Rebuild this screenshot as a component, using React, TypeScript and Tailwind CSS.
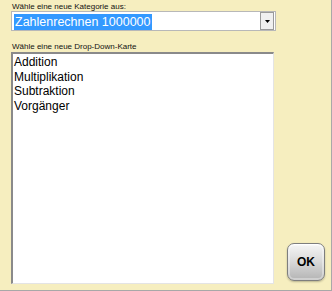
import { useState } from "react";

const cards = ["Addition", "Multiplikation", "Subtraktion", "Vorgänger"];

export default function App() {
  const [selected] = useState("Zahlenrechnen 1000000");

  return (
    <div className="w-[332px] h-[291px] bg-[#f6eebf] border-r border-b border-[#a8a8a8] font-['Liberation_Sans',Arial,sans-serif] text-black overflow-hidden">
      <div className="flex flex-col pl-[11px] pt-[2px]">
        <label className="block h-[9px] pl-[1px] text-[8px] leading-[9px] text-[#111]">
          Wähle eine neue Kategorie aus:
        </label>

        {/* combobox */}
        <div className="flex w-[265px] h-[20px] items-center bg-white border border-[#b8b8b8]">
          <div className="flex-1 pl-[2px]">
            <span className="inline-block bg-[#3399ff] text-white text-[12.5px] leading-[16px] px-[1px]">
              {selected}
            </span>
          </div>
          <div className="mr-[1px] flex h-[18px] w-[14px] items-center justify-center border border-[#9a9a9a] bg-[#f0f0f0]">
            <svg width="5" height="3" viewBox="0 0 5 3">
              <path d="M0 0h5L2.5 3z" fill="#000" />
            </svg>
          </div>
        </div>

        <label className="block mt-[11px] h-[10px] pl-[1px] text-[8px] leading-[10px] text-[#111]">
          Wähle eine neue Drop-Down-Karte
        </label>

        <div className="flex items-end">
          {/* listbox */}
          <ul className="w-[263px] h-[232px] bg-white border-t-2 border-l-2 border-t-[#8a8a8a] border-l-[#8a8a8a] border-r border-b border-r-[#e4e4e4] border-b-[#e4e4e4] pl-[1px] pt-[1px]">
            {cards.map((c) => (
              <li key={c} className="text-[12px] leading-[14.5px]">
                {c}
              </li>
            ))}
          </ul>

          <button className="ml-[13px] mb-[3px] flex h-[38px] w-[38px] items-center justify-center rounded-[7px] border border-[#7e7e7e] bg-gradient-to-b from-[#f6f6f6] via-[#d8d8d8] to-[#b4b4b4] shadow-[inset_0_1px_0_#ffffff,inset_0_0_0_2px_rgba(255,255,255,0.35),0_1px_2px_rgba(0,0,0,0.25)] text-[12px] font-bold text-black">
            OK
          </button>
        </div>
      </div>
    </div>
  );
}
